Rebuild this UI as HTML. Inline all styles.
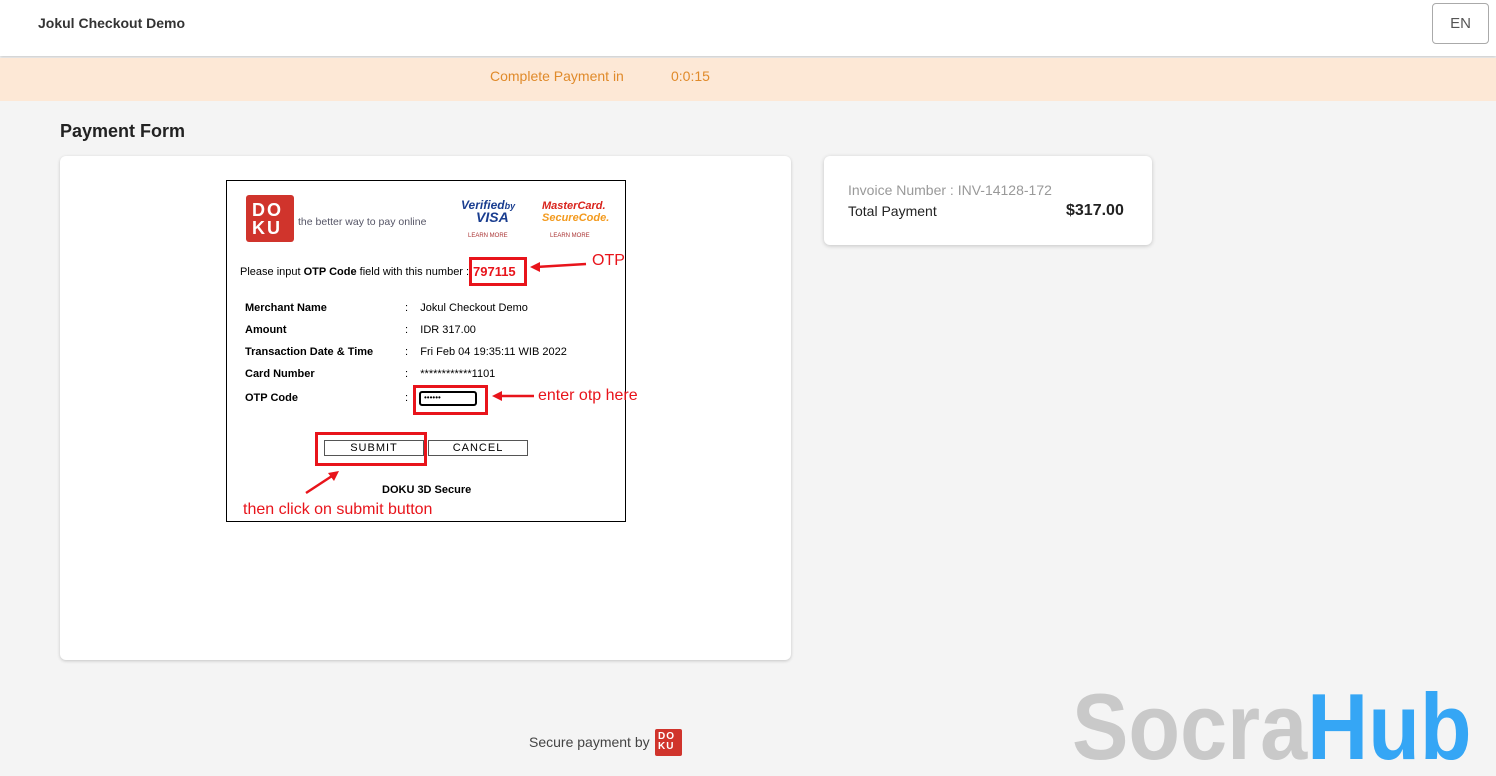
<!DOCTYPE html>
<html><head><meta charset="utf-8"><style>
*{margin:0;padding:0;box-sizing:border-box}
html,body{width:1496px;height:776px;overflow:hidden}
body{background:#f4f4f4;font-family:"Liberation Sans",sans-serif;position:relative}
.a{position:absolute}
.hdr{left:0;top:0;width:1496px;height:56px;background:#fff;box-shadow:0 1px 3px rgba(0,0,0,.2)}
.t{font-size:11px;color:#000}
.b{font-weight:bold}
.rb{border:3px solid #e8141b}
.red{color:#e8141b}
</style></head><body>
<div class="a hdr"></div>
<div class="a" style="left:38px;top:15px;font-size:14px;font-weight:bold;color:#333">Jokul Checkout Demo</div>
<div class="a" style="left:1432px;top:3px;width:57px;height:41px;border:1px solid #aaa;border-radius:4px;font-size:15px;color:#555;text-align:center;line-height:39px">EN</div>
<div class="a" style="left:0;top:58px;width:1496px;height:43px;background:#fde8d6"></div>
<div class="a" style="left:490px;top:68px;font-size:14px;color:#e08a2a">Complete Payment in</div>
<div class="a" style="left:671px;top:68px;font-size:14px;color:#e08a2a">0:0:15</div>
<div class="a" style="left:60px;top:121px;font-size:18px;font-weight:bold;color:#222">Payment Form</div>
<div class="a" style="left:60px;top:156px;width:731px;height:504px;background:#fff;border-radius:6px;box-shadow:0 1px 3px rgba(0,0,0,.2)"></div>
<div class="a" style="left:824px;top:156px;width:328px;height:89px;background:#fff;border-radius:6px;box-shadow:0 1px 4px rgba(0,0,0,.2)"></div>
<div class="a" style="left:848px;top:182px;font-size:14px;color:#999">Invoice Number : INV-14128-172</div>
<div class="a" style="left:848px;top:203px;font-size:14px;color:#222">Total Payment</div>
<div class="a" style="left:1066px;top:202px;font-size:16px;font-weight:bold;color:#222">$317.00</div>

<div class="a" style="left:226px;top:180px;width:400px;height:342px;border:1px solid #000;background:#fff"></div>
<div class="a" style="left:246px;top:195px;width:48px;height:47px;background:#d0342c;border-radius:3px;color:#fff;font-weight:bold;font-size:18px;line-height:18px;padding:6px 0 0 6px;letter-spacing:2px">DO<br>KU</div>
<div class="a" style="left:298px;top:216px;font-size:10.5px;color:#556">the better way to pay online</div>
<div class="a" style="left:461px;top:198px;font-size:12px;font-style:italic;font-weight:bold;color:#1a3d8f">Verified<span style="font-size:9px">by</span></div>
<div class="a" style="left:476px;top:209px;font-size:14px;font-style:italic;font-weight:bold;color:#1a3d8f">VISA</div>
<div class="a" style="left:468px;top:233px;font-size:6px;color:#a33">LEARN MORE</div>
<div class="a" style="left:542px;top:200px;font-size:11px;font-style:italic;font-weight:bold;color:#d9231c;line-height:12px">MasterCard.<br><span style="color:#f39a1e">SecureCode.</span></div>
<div class="a" style="left:550px;top:233px;font-size:6px;color:#a33">LEARN MORE</div>
<div class="a t" style="left:240px;top:266px">Please input <b>OTP Code</b> field with this number :</div>
<div class="a rb" style="left:469px;top:257px;width:58px;height:29px"></div>
<div class="a red b" style="left:473px;top:264px;font-size:13px">797115</div>
<svg class="a" style="left:528px;top:258px" width="60" height="16"><path d="M58 6 L8 9" stroke="#e8141b" stroke-width="2.5"/><path d="M2 9 L12 4 L12 14Z" fill="#e8141b"/></svg>
<div class="a red" style="left:592px;top:252px;font-size:16px">OTP</div>
<div class="a t b" style="left:245px;top:302px">Merchant Name</div>
<div class="a t b" style="left:245px;top:324px">Amount</div>
<div class="a t b" style="left:245px;top:346px">Transaction Date &amp; Time</div>
<div class="a t b" style="left:245px;top:368px">Card Number</div>
<div class="a t b" style="left:245px;top:392px">OTP Code</div>
<div class="a t" style="left:405px;top:302px">:&nbsp;&nbsp;&nbsp;&nbsp;Jokul Checkout Demo</div>
<div class="a t" style="left:405px;top:324px">:&nbsp;&nbsp;&nbsp;&nbsp;IDR 317.00</div>
<div class="a t" style="left:405px;top:346px">:&nbsp;&nbsp;&nbsp;&nbsp;Fri Feb 04 19:35:11 WIB 2022</div>
<div class="a t" style="left:405px;top:368px">:&nbsp;&nbsp;&nbsp;&nbsp;************1101</div>
<div class="a t" style="left:405px;top:392px">:</div>
<div class="a rb" style="left:413px;top:385px;width:75px;height:30px"></div>
<div class="a" style="left:419px;top:391px;width:58px;height:15px;border:2px solid #000;border-radius:3px;font-size:8px;line-height:10px;padding-left:3px">••••••</div>
<svg class="a" style="left:490px;top:388px" width="46" height="16"><path d="M44 8 L8 8" stroke="#e8141b" stroke-width="2.5"/><path d="M2 8 L12 3 L12 13Z" fill="#e8141b"/></svg>
<div class="a red" style="left:538px;top:387px;font-size:16px">enter otp here</div>
<div class="a rb" style="left:315px;top:432px;width:112px;height:34px"></div>
<div class="a" style="left:324px;top:440px;width:100px;height:16px;border:1px solid #555;font-size:11px;text-align:center;line-height:14px;letter-spacing:1px">SUBMIT</div>
<div class="a" style="left:428px;top:440px;width:100px;height:16px;border:1px solid #555;font-size:11px;text-align:center;line-height:14px;letter-spacing:1px">CANCEL</div>
<svg class="a" style="left:302px;top:468px" width="40" height="28"><path d="M4 25 L30 8" stroke="#e8141b" stroke-width="2.5"/><path d="M37 3 L26 5 L32 13Z" fill="#e8141b"/></svg>
<div class="a t b" style="left:382px;top:484px">DOKU 3D Secure</div>
<div class="a red" style="left:243px;top:501px;font-size:16px">then click on submit button</div>

<div class="a" style="left:529px;top:734px;font-size:14px;color:#444">Secure payment by</div>
<div class="a" style="left:655px;top:729px;width:27px;height:27px;background:#d0342c;border-radius:2px;color:#fff;font-weight:bold;font-size:10px;line-height:10px;padding:3px 0 0 3px;letter-spacing:1px">DO<br>KU</div>
<div class="a" style="left:1072px;top:680px;font-size:94px;font-weight:bold;line-height:94px;white-space:nowrap;transform:scaleX(0.9);transform-origin:0 0"><span style="color:#c9c9c9">Socra</span><span style="color:#35a6f5">Hub</span></div>
</body></html>
